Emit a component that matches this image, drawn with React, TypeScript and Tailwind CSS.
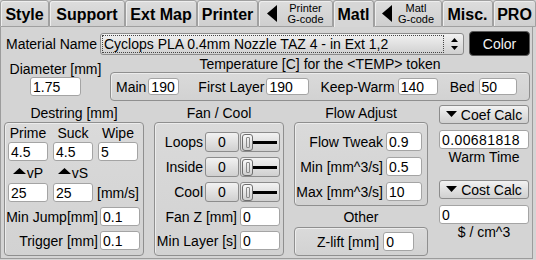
import React from "react";

type FieldProps = { w: string; h?: string; value: string; className?: string };

function Field({ w, h = "h-[19px]", value, className = "" }: FieldProps) {
  return (
    <div
      className={`${w} ${h} ${className} shrink-0 bg-white border border-[#a4a4a4] rounded-[3px] flex items-center pl-[2px] leading-none`}
    >
      {value}
    </div>
  );
}

function Tab({
  w,
  active,
  children,
}: {
  w: string;
  active?: boolean;
  children: React.ReactNode;
}) {
  return (
    <div
      className={`${w} h-full flex items-center justify-center border-t border-x border-[#a0a0a0] rounded-t-[3px] shadow-[inset_1px_1px_0_#eeeeee] ${
        active ? "bg-[#d6d6d6]" : "border-b bg-linear-to-b from-[#dddddd] to-[#cfcfcf]"
      }`}
    >
      {children}
    </div>
  );
}

function ArrowTab({ w, top, gap }: { w: string; top: string; gap: string }) {
  return (
    <Tab w={w}>
      <div className={`flex items-center ${gap}`}>
        <svg width="10" height="17" viewBox="0 0 10 17">
          <polygon points="10,0 10,17 0,8.5" fill="#000" />
        </svg>
        <div className="flex flex-col items-center text-[11px] leading-[11px] pt-[1px]">
          <span>{top}</span>
          <span>G-code</span>
        </div>
      </div>
    </Tab>
  );
}

const boxCls =
  "border border-[#8f8f8f] rounded-[4px] shadow-[inset_1px_1px_0_#ececec] bg-linear-to-b from-[#dadada] to-[#d2d2d2]";
const btnCls =
  "border border-[#8c8c8c] rounded-[3px] bg-linear-to-b from-[#f2f2f2] to-[#d0d0d0]";

function Slider() {
  return (
    <div className={`w-[40px] h-[20px] ml-[1px] ${btnCls} flex items-center pl-[1px] pr-[2px]`}>
      <div className="w-[11px] h-[17px] rounded-[3px] border border-[#6e6e6e] bg-linear-to-b from-[#fafafa] to-[#cfcfcf] flex justify-center items-center">
        <div className="w-[4px] h-[11px] border border-[#8a8a8a] rounded-[1px]" />
      </div>
      <div className="flex-1 h-[3px] bg-black" />
    </div>
  );
}

function FanRow({ label, className = "" }: { label: string; className?: string }) {
  return (
    <div className={`flex justify-end items-center pr-[3px] h-[20px] ${className}`}>
      <span className="mr-[2px]">{label}</span>
      <div className={`w-[34px] h-[20px] ${btnCls} flex items-center justify-center`}>0</div>
      <Slider />
    </div>
  );
}

function Down() {
  return (
    <svg width="11" height="6" viewBox="0 0 11 6" className="mb-[1px]">
      <polygon points="0,0 11,0 5.5,6" fill="#000" />
    </svg>
  );
}

function Up() {
  return (
    <svg width="13" height="6" viewBox="0 0 13 6" className="mt-[3px]">
      <polygon points="0,6 13,6 6.5,0" fill="#000" />
    </svg>
  );
}

export default function App() {
  return (
    <div className="w-[536px] h-[260px] bg-[#d4d4d4] overflow-hidden font-['Liberation_Sans',Arial,sans-serif] text-[14px] leading-[16px] text-black">
      {/* tab strip */}
      <div className="flex h-[27px] font-bold text-[16px]">
        <Tab w="w-[49px]"><span className="pt-[2px]">Style</span></Tab>
        <Tab w="w-[76px]"><span className="pt-[2px]">Support</span></Tab>
        <Tab w="w-[72px]"><span className="pt-[2px]">Ext Map</span></Tab>
        <Tab w="w-[61px]"><span className="pt-[2px]">Printer</span></Tab>
        <div className="font-normal">
          <ArrowTab w="w-[75px]" top="Printer" gap="gap-[10px]" />
        </div>
        <Tab w="w-[41px]" active><span className="pt-[2px]">Matl</span></Tab>
        <div className="font-normal">
          <ArrowTab w="w-[68px]" top="Matl" gap="gap-[6px]" />
        </div>
        <Tab w="w-[51px]"><span className="pt-[2px]">Misc.</span></Tab>
        <Tab w="w-[43px]"><span className="pt-[2px]">PRO</span></Tab>
      </div>

      {/* panel */}
      <div className="w-[533px] h-[232px] border-x border-b border-[#9c9c9c] flex flex-col">
        {/* material row */}
        <div className="flex items-center h-[25px] mt-[4px]">
          <div className="w-[99px] pl-[5px]">Material Name</div>
          <div className={`w-[364px] h-[22px] ${btnCls} flex items-center pl-[1px]`}>
            <div className="w-[342px] h-[18px] border border-dotted border-[#444] flex items-center pl-[1px] whitespace-nowrap">
              Cyclops PLA 0.4mm Nozzle TAZ 4 - in Ext 1,2
            </div>
            <svg width="7" height="12" viewBox="0 0 7 12" className="ml-[7px]">
              <polygon points="0,4 7,4 3.5,0" fill="#000" />
              <polygon points="0,8 7,8 3.5,12" fill="#000" />
            </svg>
          </div>
          <div className="ml-[5px] w-[61px] h-[25px] bg-black border border-[#5a5a5a] rounded-[4px] text-[#f2f2f2] flex items-center justify-center">
            Color
          </div>
        </div>

        {/* diameter + temperature */}
        <div className="flex">
          <div className="w-[109px] flex flex-col items-center">
            <div className="mt-[5px]">Diameter [mm]</div>
            <Field w="w-[51px]" value="1.75" />
          </div>
          <div className="w-[420px] flex flex-col">
            <div className="text-center">Temperature [C] for the &lt;TEMP&gt; token</div>
            <div className={`h-[29px] ${boxCls} flex items-center`}>
              <span className="ml-[5px]">Main</span>
              <Field w="w-[31px]" h="h-[17px]" className="ml-[2px]" value="190" />
              <span className="ml-[19px]">First Layer</span>
              <Field w="w-[43px]" h="h-[17px]" className="ml-[2px]" value="190" />
              <span className="ml-[11px]">Keep-Warm</span>
              <Field w="w-[40px]" h="h-[17px]" className="ml-[3px]" value="140" />
              <span className="ml-[12px]">Bed</span>
              <Field w="w-[38px]" h="h-[17px]" className="ml-[4px]" value="50" />
            </div>
          </div>
        </div>

        {/* lower groups */}
        <div className="flex mt-[4px] ml-[3px]">
          {/* Destring */}
          <div className="w-[140px] flex flex-col">
            <div className="text-center">Destring [mm]</div>
            <div className={`mt-[1px] h-[134px] ${boxCls} flex flex-col`}>
              <div className="flex pl-[3px] gap-[5px] mt-[2px]">
                <div className="w-[40px] flex flex-col items-center">
                  <span>Prime</span>
                  <Field w="w-[40px]" className="mt-[1px]" value="4.5" />
                  <div className="mt-[4px] flex items-start gap-[1px]">
                    <Up />
                    <span>vP</span>
                  </div>
                  <Field w="w-[40px]" className="mt-[2px]" value="25" />
                </div>
                <div className="w-[40px] flex flex-col items-center">
                  <span>Suck</span>
                  <Field w="w-[40px]" className="mt-[1px]" value="4.5" />
                  <div className="mt-[4px] flex items-start gap-[1px]">
                    <Up />
                    <span>vS</span>
                  </div>
                  <Field w="w-[40px]" className="mt-[2px]" value="25" />
                </div>
                <div className="w-[40px] flex flex-col items-center">
                  <span>Wipe</span>
                  <Field w="w-[40px]" className="mt-[1px]" value="5" />
                  <div className="mt-[4px] h-[16px]" />
                  <div className="mt-[2px] h-[19px] flex items-center">[mm/s]</div>
                </div>
              </div>
              <div className="flex justify-end items-center pr-[3px] mt-[5px]">
                <span className="mr-[2px]">Min Jump[mm]</span>
                <Field w="w-[40px]" value="0.1" />
              </div>
              <div className="flex justify-end items-center pr-[3px] mt-[5px]">
                <span className="mr-[2px]">Trigger [mm]</span>
                <Field w="w-[40px]" value="0.1" />
              </div>
            </div>
          </div>

          {/* Fan / Cool */}
          <div className="w-[130px] ml-[10px] flex flex-col">
            <div className="text-center">Fan / Cool</div>
            <div className={`mt-[1px] h-[134px] ${boxCls} flex flex-col`}>
              <FanRow label="Loops" className="mt-[9px]" />
              <FanRow label="Inside" className="mt-[5px]" />
              <FanRow label="Cool" className="mt-[5px]" />
              <div className="flex justify-end items-center pr-[3px] mt-[5px]">
                <span className="mr-[3px]">Fan Z [mm]</span>
                <Field w="w-[40px]" value="0" />
              </div>
              <div className="flex justify-end items-center pr-[3px] mt-[5px]">
                <span className="mr-[3px]">Min Layer [s]</span>
                <Field w="w-[40px]" value="0" />
              </div>
            </div>
          </div>

          {/* Flow / Other */}
          <div className="w-[134px] ml-[10px] flex flex-col">
            <div className="text-center">Flow Adjust</div>
            <div className={`mt-[1px] h-[84px] ${boxCls} flex flex-col`}>
              <div className="flex justify-end items-center pr-[5px] mt-[9px]">
                <span className="mr-[3px]">Flow Tweak</span>
                <Field w="w-[36px]" value="0.9" />
              </div>
              <div className="flex justify-end items-center pr-[5px] mt-[6px]">
                <span className="mr-[3px]">Min [mm^3/s]</span>
                <Field w="w-[36px]" value="0.5" />
              </div>
              <div className="flex justify-end items-center pr-[5px] mt-[6px]">
                <span className="mr-[3px]">Max [mm^3/s]</span>
                <Field w="w-[36px]" value="10" />
              </div>
            </div>
            <div className="text-center mt-[3px]">Other</div>
            <div className={`mt-[2px] h-[29px] ${boxCls} flex items-center`}>
              <span className="ml-[22px] mr-[4px]">Z-lift [mm]</span>
              <Field w="w-[31px]" value="0" />
            </div>
          </div>

          {/* calc column */}
          <div className="w-[90px] ml-[11px] flex flex-col items-center">
            <div className={`w-[90px] h-[19px] ${btnCls} flex items-center justify-center gap-[4px]`}>
              <Down />
              <span>Coef Calc</span>
            </div>
            <Field w="w-[90px]" className="mt-[6px] tracking-[0.4px]" value="0.00681818" />
            <div>Warm Time</div>
            <div className={`mt-[15px] w-[90px] h-[19px] ${btnCls} flex items-center justify-center gap-[4px]`}>
              <Down />
              <span>Cost Calc</span>
            </div>
            <Field w="w-[90px]" className="mt-[6px]" value="0" />
            <div className="mt-[1px] leading-[15px]">$ / cm^3</div>
          </div>
        </div>
      </div>
    </div>
  );
}
